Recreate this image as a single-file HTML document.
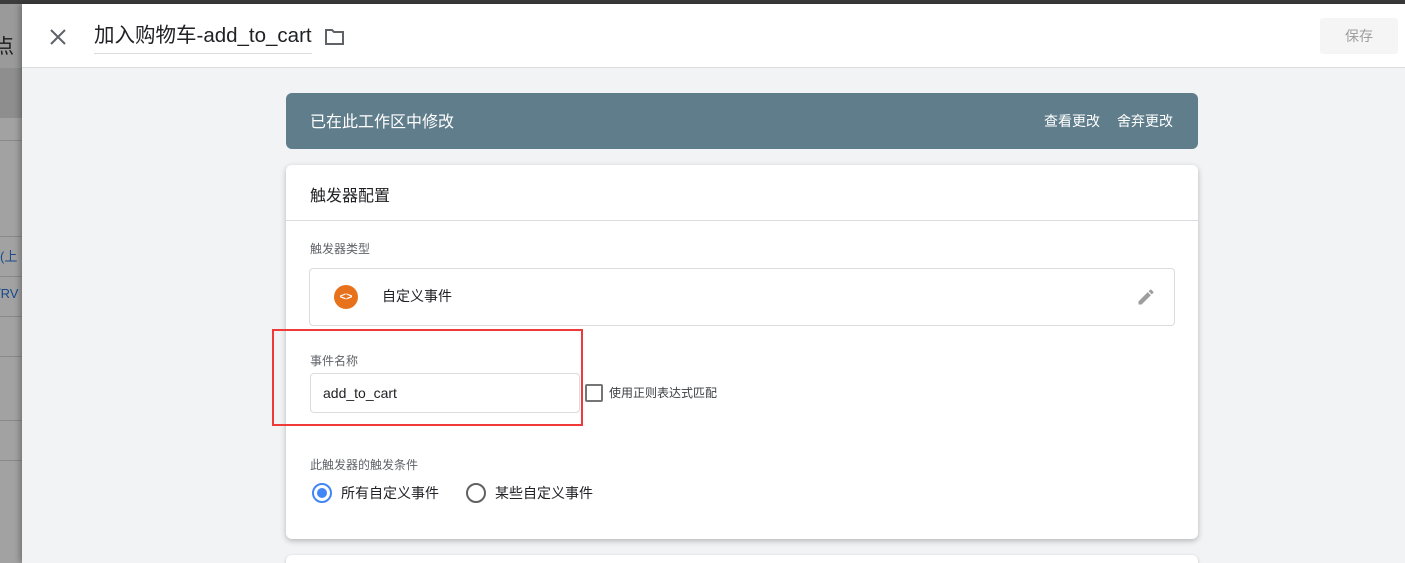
<!DOCTYPE html>
<html><head><meta charset="utf-8"><style>
*{box-sizing:border-box;margin:0;padding:0}
html,body{width:1405px;height:563px;overflow:hidden}
body{background:#f1f3f4;font-family:"Liberation Sans","Noto Sans CJK SC",sans-serif;position:relative;color:#202124}
.abs{position:absolute}
</style></head><body>
<div class="abs" style="left:0;top:0;width:1405px;height:4px;background:#3c3c3c"></div>
<div class="abs" style="left:0;top:4px;width:22px;height:559px;background:#9a9a9a"></div>
<div class="abs" style="left:0;top:68px;width:22px;height:50px;background:#8e8e8e"></div>
<div class="abs" style="left:0;top:118px;width:22px;height:445px;background:#a2a2a2"></div>
<div class="abs" style="left:0;top:140px;width:22px;height:1px;background:#8a8a8a"></div>
<div class="abs" style="left:0;top:236px;width:22px;height:1px;background:#8a8a8a"></div>
<div class="abs" style="left:0;top:276px;width:22px;height:1px;background:#8a8a8a"></div>
<div class="abs" style="left:0;top:316px;width:22px;height:1px;background:#8a8a8a"></div>
<div class="abs" style="left:0;top:356px;width:22px;height:1px;background:#8a8a8a"></div>
<div class="abs" style="left:0;top:420px;width:22px;height:1px;background:#8a8a8a"></div>
<div class="abs" style="left:0;top:460px;width:22px;height:1px;background:#8a8a8a"></div>
<div class="abs" style="left:-6px;top:30px;font-size:20px;color:#1a1a1a;overflow:hidden;width:28px;white-space:nowrap">点</div>
<div class="abs" style="left:0;top:246px;font-size:13px;color:#1a4a8a;overflow:hidden;width:22px;white-space:nowrap">(上</div>
<div class="abs" style="left:-3px;top:286px;font-size:13px;color:#1a4a8a;overflow:hidden;width:25px;white-space:nowrap">/RV</div>
<div class="abs" style="left:22px;top:4px;width:1383px;height:559px;background:#f1f3f4;box-shadow:-2px 0 6px rgba(0,0,0,.3)"></div>
<div class="abs" style="left:22px;top:4px;width:1383px;height:64px;background:#fff;border-bottom:1px solid #dadce0"></div>
<svg class="abs" style="left:50px;top:29px" width="16" height="16" viewBox="0 0 16 16"><path d="M1 1L15 15M15 1L1 15" stroke="#5f6368" stroke-width="2"/></svg>
<div class="abs" style="left:94px;top:23px;font-size:20.5px;color:#202124;border-bottom:1px solid #dadce0;padding-bottom:4px;line-height:26px">加入购物车-add_to_cart</div>
<svg class="abs" style="left:324px;top:27px" width="22" height="20" viewBox="0 0 22 20"><path d="M2 3h6l2 2h9v12H2z" fill="none" stroke="#5f6368" stroke-width="2"/></svg>
<div class="abs" style="left:1320px;top:18px;width:78px;height:36px;background:#f5f5f5;border-radius:3px;color:#9e9e9e;font-size:14px;text-align:center;line-height:36px">保存</div>
<div class="abs" style="left:286px;top:93px;width:912px;height:56px;background:#607d8b;border-radius:6px;color:#fff;font-size:16px">
<span class="abs" style="left:24px;top:15px">已在此工作区中修改</span>
<span class="abs" style="left:758px;top:18px;font-size:14px">查看更改</span>
<span class="abs" style="left:831px;top:18px;font-size:14px">舍弃更改</span>
</div>
<div class="abs" style="left:286px;top:165px;width:912px;height:374px;background:#fff;border-radius:6px;box-shadow:0 2px 6px rgba(0,0,0,.25)">
<div class="abs" style="left:24px;top:17px;font-size:16px">触发器配置</div>
<div class="abs" style="left:0;top:55px;width:912px;height:1px;background:#dadce0"></div>
<div class="abs" style="left:24px;top:75px;font-size:12px;color:#5f6368">触发器类型</div>
<div class="abs" style="left:23px;top:103px;width:866px;height:58px;border:1px solid #dadce0;border-radius:4px">
<div class="abs" style="left:24px;top:16px;width:24px;height:24px;border-radius:50%;background:#e8711c;color:#fff;font-size:11px;font-weight:bold;text-align:center;line-height:24px">&lt;&gt;</div>
<div class="abs" style="left:72px;top:17px;font-size:14px">自定义事件</div>
<svg class="abs" style="left:826px;top:18px" width="20" height="20" viewBox="0 0 24 24"><path d="M3 17.25V21h3.75L17.81 9.94l-3.75-3.75L3 17.25zM20.71 7.04a1 1 0 000-1.41l-2.34-2.34a1 1 0 00-1.41 0l-1.83 1.83 3.75 3.75 1.83-1.83z" fill="#9e9e9e"/></svg>
</div>
<div class="abs" style="left:24px;top:187px;font-size:12px;color:#5f6368">事件名称</div>
<div class="abs" style="left:24px;top:208px;width:270px;height:40px;border:1px solid #dadce0;border-radius:4px;font-size:14px;line-height:38px;padding-left:12px">add_to_cart</div>
<div class="abs" style="left:299px;top:219px;width:18px;height:18px;border:2px solid #757575;border-radius:2px"></div>
<div class="abs" style="left:323px;top:219px;font-size:12px;color:#3c4043">使用正则表达式匹配</div>
<div class="abs" style="left:24px;top:291px;font-size:12px;color:#5f6368">此触发器的触发条件</div>
<div class="abs" style="left:26px;top:318px;width:20px;height:20px;border:2px solid #4285f4;border-radius:50%"><div style="margin:3px;width:10px;height:10px;border-radius:50%;background:#4285f4"></div></div>
<div class="abs" style="left:55px;top:318px;font-size:14px">所有自定义事件</div>
<div class="abs" style="left:180px;top:318px;width:20px;height:20px;border:2px solid #616161;border-radius:50%"></div>
<div class="abs" style="left:209px;top:318px;font-size:14px">某些自定义事件</div>
</div>
<div class="abs" style="left:272px;top:329px;width:311px;height:97px;border:2px solid #f03a3a"></div>
<div class="abs" style="left:286px;top:555px;width:912px;height:20px;background:#fff;border-radius:6px;box-shadow:0 1px 3px rgba(0,0,0,.2)"></div>
</body></html>
